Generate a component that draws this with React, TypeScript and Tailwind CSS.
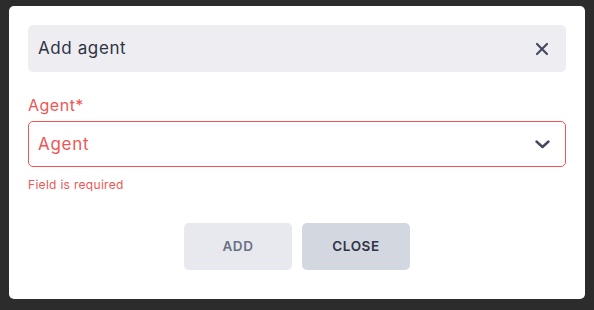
export default function App() {
  return (
    <div
      className="w-[594px] h-[310px] bg-[#2c2c2c] pt-[6px] pl-[9px]"
      style={{ fontFamily: '"Inter", "Open Sans", sans-serif' }}
    >
      <div className="w-[576px] h-[293px] bg-white rounded-[5px] px-[19px] pt-[19px]">
        <div className="h-[47px] bg-[#eeeef2] rounded-[5px] flex items-center justify-between pl-[10px] pr-[17px]">
          <span className="text-[17px] tracking-[0.6px] text-[#2f3445]">Add agent</span>
          <svg width="14" height="14" viewBox="0 0 14 14" fill="none">
            <path d="M2 2L12 12M12 2L2 12" stroke="#454a60" strokeWidth="2.2" strokeLinecap="round" />
          </svg>
        </div>

        <div className="mt-[22px] text-[16px] leading-[22px] tracking-[0.5px] text-[#f05555]">Agent*</div>
        <div className="mt-[5px] h-[46px] border border-[#f05555] rounded-[5px] flex items-center justify-between pl-[9px] pr-[15px]">
          <span className="text-[17px] tracking-[0.7px] text-[#f05555] pt-[2px]">Agent</span>
          <svg width="15" height="9" viewBox="0 0 15 9" fill="none">
            <path d="M1.5 1.5L7.5 7L13.5 1.5" stroke="#454a60" strokeWidth="2.4" strokeLinecap="round" strokeLinejoin="round" />
          </svg>
        </div>
        <div className="mt-[10px] text-[12px] leading-[16px] tracking-[0.3px] text-[#f05555]">Field is required</div>

        <div className="mt-[30px] flex justify-center gap-[10px]">
          <button className="w-[108px] h-[47px] rounded-[5px] bg-[#e8e9ef] text-[13.5px] tracking-[0.6px] font-semibold text-[#6b7085]">
            ADD
          </button>
          <button className="w-[108px] h-[47px] rounded-[5px] bg-[#d3d7e0] text-[13.5px] tracking-[0.6px] font-semibold text-[#2f3445]">
            CLOSE
          </button>
        </div>
      </div>
    </div>
  );
}
